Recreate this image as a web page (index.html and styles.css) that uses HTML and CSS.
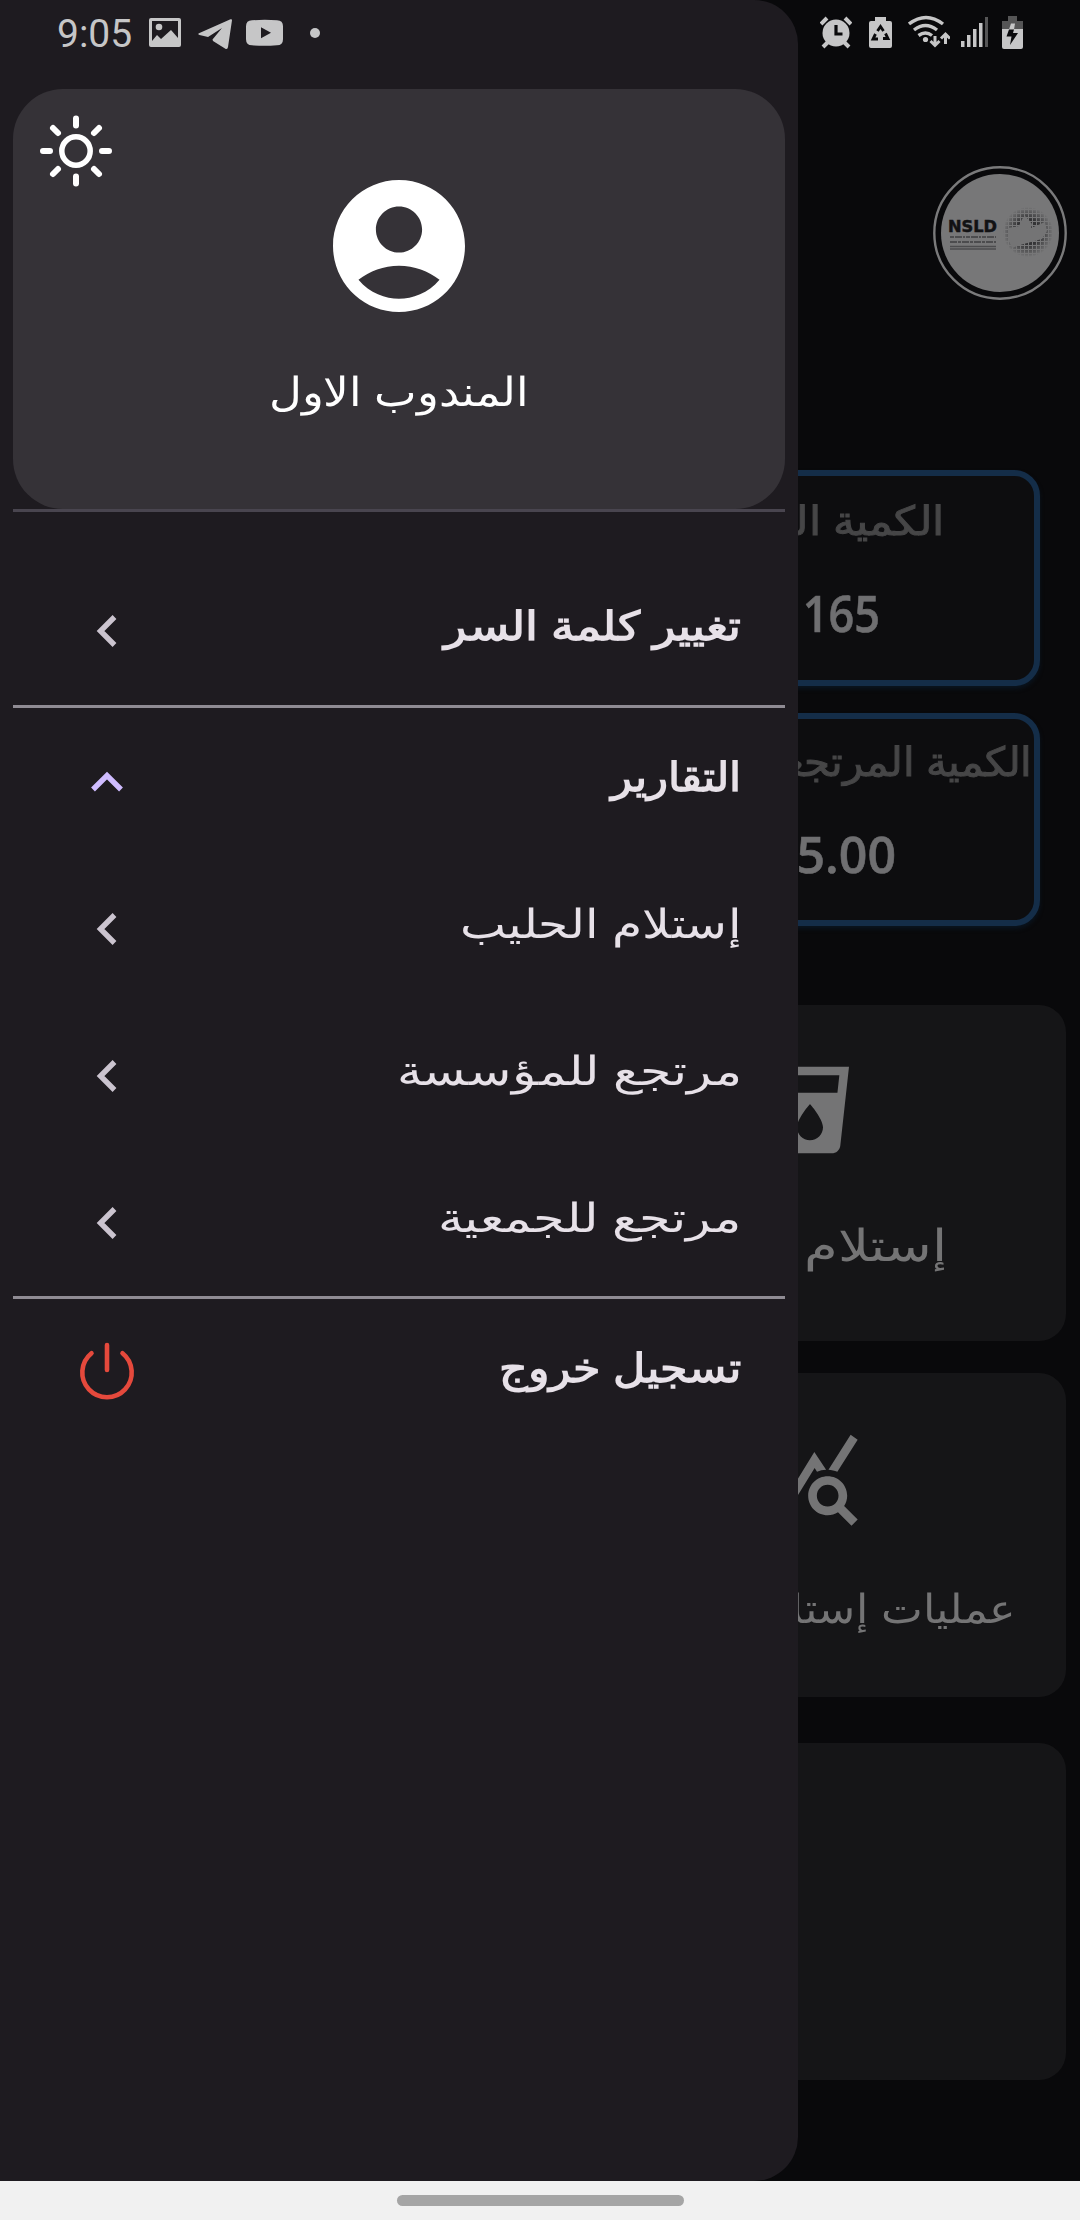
FILE: index.html
```
<!DOCTYPE html>
<html lang="ar" dir="rtl">
<head>
<meta charset="utf-8">
<title>القائمة</title>
<link rel="stylesheet" href="styles.css">
</head>
<body>
<div class="screen">
  <main class="home">
    <div class="logo">
      <svg viewBox="0 0 134 134" width="134" height="134">
        <defs>
          <pattern id="dots" width="4" height="4" patternUnits="userSpaceOnUse"><rect width="3" height="3" fill="#333335"/></pattern>
          <radialGradient id="fade"><stop offset=".5" stop-color="#fff"/><stop offset="1" stop-color="#000"/></radialGradient>
          <mask id="globe"><circle cx="95" cy="66" r="25" fill="url(#fade)"/></mask>
        </defs>
        <circle cx="67" cy="67" r="65.7" fill="none" stroke="#7a7a7b" stroke-width="2.4"/>
        <circle cx="67" cy="67" r="59" fill="#777778"/>
        <rect x="70" y="41" width="50" height="50" fill="url(#dots)" mask="url(#globe)"/>
        <path d="M75 62l11-2 3-7 3-3 3 3 4 5-1 4 14-6 2 9-5 8-22 6-8 3-4-9z" fill="#747475"/>
        <text x="15" y="66" class="logo-name" textLength="49" lengthAdjust="spacingAndGlyphs">NSLD</text>
        <g stroke="#4c4c4e" stroke-width="2"><path d="M17 71h46" stroke-dasharray="4 1 7 1 2 1"/><path d="M17 76h46" stroke-dasharray="7 1 3 1"/><path d="M17 80.500h46M17 83h46" stroke-width="1.300"/></g>
      </svg>
    </div>
    <section class="stats">
      <article class="stat stat-received"><p class="stat-title">الكمية المستلمة</p><p class="stat-value">165</p></article>
      <article class="stat stat-returned"><p class="stat-title">الكمية المرتجعة</p><p class="stat-value">5.00</p></article>
    </section>
    <section class="tiles">
      <article class="tile tile-milk">
        <svg viewBox="0 0 24 24"><path d="M3 2l2.010 18.230C5.130 21.230 5.970 22 7 22h10c1.030 0 1.870-.77 1.990-1.770L21 2H3zm9 17c-1.660 0-3-1.340-3-3 0-2 3-5.400 3-5.400s3 3.400 3 5.400c0 1.660-1.340 3-3 3zm6.330-11H5.670l-.44-4h13.540l-.44 4z"/></svg>
        <p>إستلام الحليب</p>
      </article>
      <article class="tile tile-operations">
        <svg viewBox="0 0 24 24"><path d="M19.880 18.470c.44-.7.7-1.510.7-2.390 0-2.490-2.010-4.500-4.500-4.500s-4.500 2.010-4.500 4.500 2.010 4.500 4.490 4.500c.88 0 1.700-.26 2.390-.7L21.580 23 23 21.580l-3.120-3.110zm-3.800.11c-1.380 0-2.500-1.120-2.500-2.500s1.120-2.500 2.500-2.500 2.500 1.120 2.500 2.500-1.120 2.500-2.500 2.500zM15.720 10.080c-.74.02-1.450.18-2.100.45l-.55-.83-3.800 6.180-3.010-3.520-3.630 5.810L1 17l5-8 3 3.500L13 6l2.720 4.080zm2.590.5c-.64-.28-1.330-.45-2.050-.49L21.380 2 23 3.180l-4.690 7.400z"/></svg>
        <p>عمليات إستلام</p>
      </article>
      <article class="tile tile-empty"></article>
    </section>
  </main>

  <aside class="drawer">
    <header class="profile">
      <svg class="sun" viewBox="0 0 74 74"><circle cx="37" cy="37" r="14.200" stroke-width="5.500"/><path stroke-width="6" d="M37 4.500v7M37 62.500v7M4 37h7M63 37h7M14 14l5 5M55 55l5 5M60 14l-5 5M19 55l-5 5"/></svg>
      <svg class="avatar" viewBox="2 2 20 20"><path d="M12 2C6.480 2 2 6.480 2 12s4.480 10 10 10 10-4.480 10-10S17.520 2 12 2zm0 4c1.930 0 3.500 1.570 3.500 3.500S13.930 13 12 13s-3.500-1.570-3.500-3.500S10.070 6 12 6zm0 14c-2.030 0-4.430-.82-6.140-2.880C7.550 15.800 9.680 15 12 15s4.450.8 6.140 2.120C16.430 19.180 14.030 20 12 20z"/></svg>
      <p class="user-name">المندوب الاول</p>
    </header>
    <nav class="menu">
      <a class="item strong password"><span>تغيير كلمة السر</span><svg viewBox="0 0 60 60"><path d="M37.500 16L23.500 30l14 14"/></svg></a>
      <a class="item strong reports"><span>التقارير</span><svg viewBox="0 0 60 60"><path d="M16 37.500L30 23.500l14 14"/></svg></a>
      <a class="item milk"><span>إستلام الحليب</span><svg viewBox="0 0 60 60"><path d="M37.500 16L23.500 30l14 14"/></svg></a>
      <a class="item corporation"><span>مرتجع للمؤسسة</span><svg viewBox="0 0 60 60"><path d="M37.500 16L23.500 30l14 14"/></svg></a>
      <a class="item association"><span>مرتجع للجمعية</span><svg viewBox="0 0 60 60"><path d="M37.500 16L23.500 30l14 14"/></svg></a>
      <a class="item strong logout"><span>تسجيل خروج</span><svg viewBox="0 0 60 60"><path d="M30 4v25M14.500 12.300a24.700 24.700 0 1 0 31 0"/></svg></a>
    </nav>
  </aside>

  <div class="status" dir="ltr">
    <div class="status-side">
      <span class="clock">9:05</span>
      <svg viewBox="149 15 32 35" width="32" height="35"><path fill-rule="evenodd" d="M151 18h28q2 0 2 2v25q0 2-2 2h-28q-2 0-2-2V20q0-2 2-2zm1 3v20l5-6 4 4 10-9 7 8V21z"/><circle cx="159" cy="27" r="3.300"/></svg>
      <svg class="telegram" viewBox="198 15 34 35" width="34" height="35"><path d="M230.500 19.300q1.500-.6 1.500 1L228 47q-.5 3-3 1.500L213 41l-.5-1.500L222 28l-14 9-8.500-2q-2.500-1 0-2z"/></svg>
      <svg class="youtube" viewBox="246 15 37 35" width="37" height="35"><path fill-rule="evenodd" d="M252 20.300q13-1 25 0 6 0 6 6v13q0 6-6 6-13 1-25 0-6 0-6-6v-13q0-6 6-6zm9 7v11l10-5.500z"/></svg>
      <i class="more"></i>
    </div>
    <div class="status-side">
      <svg viewBox="820 15 32 35" width="32" height="35"><circle cx="836" cy="33" r="13.500"/><path d="M828 42l-5 5M844 42l5 5M821 24l6-6M845 18l6 6" stroke="#c6c6c7" stroke-width="4"/><path d="M836 25v9h6.500" fill="none" stroke="#0a0a0c" stroke-width="3.200"/></svg>
      <svg class="saver" viewBox="869 15 23 35" width="23" height="35"><path d="M875 17h11v4h4q2 0 2 2v23q0 2-2 2h-19q-2 0-2-2V23q0-2 2-2h4z"/><path d="M877.500 31l3-4.500 3 4.500M885.500 33.500l2.500 5h-5M878 39h-5l2.500-5" fill="none" stroke="#0a0a0c" stroke-width="2.800"/></svg>
      <svg class="wifi" viewBox="908 15 42 35" width="42" height="35"><g fill="none" stroke="#c6c6c7" stroke-width="3.400"><path d="M909 24q17-13 34 0M914 30q11.500-9 23 0M918.500 35.500q7-5 13.500 0"/><path stroke-width="3" d="M935 36v9M930.500 41l4.500 4.500 4.500-4.500M945.500 44v-9M941 38.500l4.500-4.500 4.500 4.500"/></g><circle cx="925.500" cy="39.500" r="2.600"/></svg>
      <svg class="signal" viewBox="961 15 27 35" width="27" height="35"><path d="M961 41h3.500v6H961zM967 35h3.500v12H967zM973 29h3.500v18H973zM979 23h3.500v24H979z"/><path fill="#555556" d="M985 17h3v30h-3z"/></svg>
      <svg class="charge" viewBox="1002 15 21 35" width="21" height="35"><path fill="#555556" d="M1008 16h9v5h6v8h-21v-8h6z"/><path d="M1002 29h21v18q0 2-2 2h-17q-2 0-2-2z"/><path d="M1011 23.500h4l-1 6h-5z"/><path fill="#0a0a0c" d="M1009 29.500h5l-1 3.500h5l-8 12 1.500-8.500h-5z"/></svg>
    </div>
  </div>

  <footer class="gesture"><i></i></footer>
</div>
</body>
</html>
```
FILE: styles.css
```
* { box-sizing: border-box; }
body { margin: 0; background: #09090b; }
p { margin: 0; }
svg { display: block; flex: none; }

.screen {
  position: relative;
  display: flex;
  flex-direction: column;
  width: 1080px;
  height: 2220px;
  overflow: hidden;
  font-family: "Liberation Sans", sans-serif;
}
.screen p, .item span { white-space: nowrap; transform-origin: right center; }

/* Home page under the scrim */
.home { flex: 1; padding: 166px 14px 0; background: #09090b; }
.logo { height: 304px; margin-right: -1px; }
.logo-name { font: 700 16.500px "DejaVu Sans", sans-serif; fill: #121214; stroke: #121214; stroke-width: .5px; direction: ltr; }
.stats {
  display: flex;
  flex-direction: column;
  gap: 27px;
  width: 460px;
  margin-right: 26px;
}
.stat {
  height: 216px;
  border: 6px solid #142d48;
  border-radius: 26px;
  background: #0d0d0f;
  box-shadow: 0 3px 4px #0a141f;
}
.stat-returned { height: 213px; }
.stat-title { font-size: 40px; line-height: 46px; padding-top: 22px; color: #464647; -webkit-text-stroke: 1px; transform: scaleX(1.1); }
.stat-value { font: 600 50px/60px "Open Sans", sans-serif; margin-top: 39px; color: #6f6f71; -webkit-text-stroke: .6px; }
.stat-received .stat-title { margin-right: 90px; }
.stat-received .stat-value { margin-right: 154px; transform: scaleX(.9); }
.stat-returned .stat-title { margin-right: 2px; padding-top: 20px; transform: scaleX(1.05); }
.stat-returned .stat-value { margin-right: 138px; }

.tiles { display: flex; flex-direction: column; width: 512px; margin-top: 79px; }
.tile { height: 336px; border-radius: 27px; background: #151517; color: #747475; }
.tile svg { width: 104px; height: 104px; margin: 53px auto 0; fill: #747475; }
.tile-operations { height: 324px; margin: 32px 0 46px; }
.tile-empty { height: 337px; }
.tile-milk p { font-size: 44px; line-height: 50px; margin: 59px 119px 0 0; transform: scaleX(1.24); }
.tile-operations p { font-size: 40px; line-height: 46px; margin: 56px 50px 0 0; transform: scaleX(1.11); }

/* Drawer */
.drawer {
  position: absolute;
  left: 0;
  top: 0;
  width: 798px;
  height: 2181px;
  padding: 89px 13px 0;
  border-radius: 0 44px 44px 0;
  background: #1e1b20;
  color: #e7e1e8;
}
.profile {
  position: relative;
  display: flex;
  flex-direction: column;
  align-items: center;
  height: 420px;
  padding-top: 91px;
  border-radius: 50px;
  background: #353237;
}
.sun { position: absolute; left: 26px; top: 25px; width: 74px; height: 74px; fill: none; stroke: #fff; stroke-linecap: round; }
.avatar { width: 132px; height: 132px; fill: #fff; }
.user-name { font-size: 40px; line-height: 46px; margin-top: 57px; color: #fff; }
.screen .user-name { transform-origin: center; transform: scaleX(1.13); }

.menu { border-top: 3px solid #49454f; padding-top: 45px; }
.item { display: flex; align-items: center; justify-content: space-between; height: 147px; padding: 0 44px 0 64px; }
.item span { font-size: 40px; line-height: 46px; padding-bottom: 10px; }
.item svg { width: 60px; height: 60px; fill: none; stroke: #cbc4cf; stroke-width: 5.400; }
.strong span { font-weight: 700; }
.password { height: 151px; border-bottom: 3px solid #8f8b93; }
.association { height: 150px; border-bottom: 3px solid #8f8b93; }
.item.reports svg { stroke: #cfbcff; }
.item.logout svg { margin-bottom: 4px; stroke: #e5493c; stroke-width: 4.600; stroke-linecap: round; }
.password span { transform: scaleX(1.165); }
.reports span { transform: scaleX(1.09); }
.milk span { transform: scaleX(1.22); }
.corporation span { transform: scaleX(1.265); }
.association span { transform: scaleX(1.275); }
.logout span { transform: scaleX(1.11); }

/* System bars */
.status {
  position: absolute;
  left: 0;
  top: 0;
  display: flex;
  justify-content: space-between;
  width: 1080px;
  height: 65px;
  padding: 0 57px;
}
.status-side { display: flex; align-items: center; }
.status svg { fill: #c6c6c7; }
.clock { width: 92px; font: 400 39px/46px Roboto, sans-serif; color: #c6c6c7; padding-top: 3px; }
.telegram { margin-left: 17px; }
.youtube { margin-left: 14px; }
.more { width: 10px; height: 10px; margin-left: 27px; border-radius: 50%; background: #c6c6c7; }
.saver { margin-left: 17px; }
.wifi { margin-left: 16px; }
.signal { margin-left: 11px; }
.charge { margin-left: 14px; }

.gesture { height: 39px; padding-top: 14px; background: #f1f1f1; }
.gesture i { display: block; width: 287px; height: 11px; margin: 0 auto; border-radius: 6px; background: #a5a5a5; }
```
